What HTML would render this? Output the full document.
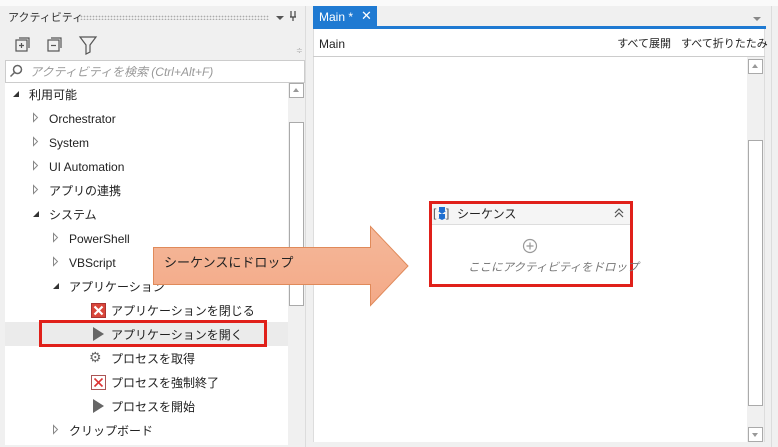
<!DOCTYPE html><html><head><meta charset="utf-8"><style>
*{margin:0;padding:0;box-sizing:border-box}
body{width:778px;height:447px;overflow:hidden;background:#f0f0f0;font-family:"Liberation Sans","Noto Sans CJK JP",sans-serif;font-size:12px;color:#222;position:relative}
.a{position:absolute}
.t{position:absolute;white-space:nowrap;font-size:12px;line-height:14px}
.tri{position:absolute;width:0;height:0}
</style></head><body>
<div class="a" style="left:0;top:0;width:778px;height:6px;background:#fafafa"></div>
<!-- left panel -->
<div class="a" style="left:0;top:6px;width:306px;height:441px;background:#f0f0f0;border-right:1px solid #dcdcdc"></div>
<div class="t" style="left:8px;top:11px;color:#333;font-size:11px">アクティビティ</div>
<div class="a" style="left:80px;top:15px;width:189px;height:5px;background-image:radial-gradient(#aaa 0.7px,transparent 0.9px);background-size:3px 3px"></div>
<div class="tri" style="left:276px;top:16px;border-left:4px solid transparent;border-right:4px solid transparent;border-top:4px solid #555"></div>
<svg class="a" style="left:289px;top:10px" width="8" height="12" fill="none" stroke="#444" stroke-width="1.2"><path d="M2 1v6M6 1v6M1 7h6M4 7v4"/></svg>
<svg class="a" style="left:14px;top:35px" width="90" height="20" viewBox="0 0 90 20" fill="none" stroke="#555" stroke-width="1.2">
<rect x="2" y="5" width="11" height="11"/><path d="M5 3h10v10"/><path d="M5 10.5h5M7.5 8v5"/>
<rect x="34" y="5" width="11" height="11"/><path d="M37 3h10v10"/><path d="M37 10.5h5"/>
<path d="M66 2h16l-6 8v7l-4 2v-9z"/></svg>
<div class="t" style="left:296px;top:44px;color:#aaa;font-size:8px">≑</div>
<div class="a" style="left:5px;top:60px;width:300px;height:23px;background:#fff;border:1px solid #ccc"></div>
<svg class="a" style="left:9px;top:64px" width="14" height="14" fill="none" stroke="#666" stroke-width="1.5"><circle cx="8.5" cy="5.5" r="4"/><path d="M5.5 8.5L1.5 12.5"/></svg>
<div class="t" style="left:30px;top:65px;color:#999;font-style:italic">アクティビティを検索 (Ctrl+Alt+F)</div>
<div class="a" style="left:5px;top:83px;width:300px;height:362px;background:#fff"></div>
<div class="a" style="left:5px;top:322px;width:283px;height:24px;background:#ebebeb"></div>
<!-- left scrollbar -->
<div class="a" style="left:288px;top:83px;width:17px;height:362px;background:#f0f0f0"></div>
<div class="a" style="left:289px;top:83px;width:15px;height:15px;border:1px solid #aaa;background:#fff"></div>
<div class="tri" style="left:293px;top:88px;border-left:3.5px solid transparent;border-right:3.5px solid transparent;border-bottom:4px solid #999"></div>
<div class="a" style="left:289px;top:122px;width:15px;height:184px;border:1px solid #aaa;background:#fff"></div>
<!-- tree -->
<div class="tri" style="left:13px;top:91px;border-left:6px solid transparent;border-bottom:6px solid #333"></div>
<div class="t" style="left:29px;top:88px">利用可能</div>
<svg class="a" style="left:0;top:0" width="300" height="447" fill="none" stroke="#888" stroke-width="1">
<path d="M33.5 113.5l4 4-4 4z"/><path d="M33.5 137.5l4 4-4 4z"/><path d="M33.5 161.5l4 4-4 4z"/><path d="M33.5 185.5l4 4-4 4z"/>
<path d="M53.5 233.5l4 4-4 4z"/><path d="M53.5 257.5l4 4-4 4z"/><path d="M53.5 425.5l4 4-4 4z"/></svg>
<div class="t" style="left:49px;top:112px">Orchestrator</div>
<div class="t" style="left:49px;top:136px">System</div>
<div class="t" style="left:49px;top:160px">UI Automation</div>
<div class="t" style="left:49px;top:184px">アプリの連携</div>
<div class="tri" style="left:33px;top:211px;border-left:6px solid transparent;border-bottom:6px solid #333"></div>
<div class="t" style="left:49px;top:208px">システム</div>
<div class="t" style="left:69px;top:232px">PowerShell</div>
<div class="t" style="left:69px;top:256px">VBScript</div>
<div class="tri" style="left:53px;top:283px;border-left:6px solid transparent;border-bottom:6px solid #333"></div>
<div class="t" style="left:69px;top:280px">アプリケーション</div>
<div class="a" style="left:91px;top:303px;width:15px;height:15px;background:#d9463a;border:1px solid #a33"></div>
<svg class="a" style="left:91px;top:303px" width="15" height="15" stroke="#fff" stroke-width="2.2"><path d="M3.5 3.5l8 8M11.5 3.5l-8 8"/></svg>
<div class="t" style="left:111px;top:304px">アプリケーションを閉じる</div>
<div class="tri" style="left:93px;top:327px;border-left:11px solid #666;border-top:7px solid transparent;border-bottom:7px solid transparent"></div>
<div class="t" style="left:111px;top:328px">アプリケーションを開く</div>
<div class="a" style="left:39px;top:320px;width:228px;height:27px;border:3px solid #e0201a"></div>
<div class="t" style="left:89px;top:350px;color:#666;font-size:14px">⚙</div>
<div class="t" style="left:111px;top:352px">プロセスを取得</div>
<div class="a" style="left:91px;top:375px;width:15px;height:15px;background:#fff;border:1px solid #a55"></div>
<svg class="a" style="left:91px;top:375px" width="15" height="15" stroke="#d33" stroke-width="1.6"><path d="M3.5 3.5l8 8M11.5 3.5l-8 8"/></svg>
<div class="t" style="left:111px;top:376px">プロセスを強制終了</div>
<div class="tri" style="left:93px;top:399px;border-left:11px solid #666;border-top:7px solid transparent;border-bottom:7px solid transparent"></div>
<div class="t" style="left:111px;top:400px">プロセスを開始</div>
<div class="t" style="left:69px;top:424px">クリップボード</div>
<!-- right panel -->
<div class="a" style="left:312px;top:6px;width:454px;height:441px;background:#f0f0f0"></div>
<div class="a" style="left:771px;top:6px;width:1px;height:441px;background:#dcdcdc"></div>
<div class="a" style="left:313px;top:6px;width:64px;height:21px;background:#1f7ad2"></div>
<div class="t" style="left:319px;top:10px;color:#fff">Main *</div>
<div class="t" style="left:361px;top:9px;color:#fff;font-size:13px">✕</div>
<div class="tri" style="left:753px;top:17px;border-left:4px solid transparent;border-right:4px solid transparent;border-top:4px solid #888"></div>
<div class="a" style="left:313px;top:26px;width:453px;height:3px;background:#1f7ad2"></div>
<div class="a" style="left:313px;top:29px;width:452px;height:413px;background:#fff;border-left:1px solid #ddd;border-right:1px solid #ddd"></div>
<div class="t" style="left:319px;top:37px">Main</div>
<div class="t" style="left:600px;width:71px;text-align:right;top:37px;font-size:11px">すべて展開</div>
<div class="t" style="left:681px;top:37px;font-size:11px">すべて折りたたみ</div>
<div class="a" style="left:313px;top:56px;width:452px;height:1px;background:#ccc"></div>
<div class="a" style="left:747px;top:57px;width:17px;height:385px;background:#f0f0f0"></div>
<div class="a" style="left:748px;top:59px;width:15px;height:15px;border:1px solid #aaa;background:#fff"></div>
<div class="tri" style="left:752px;top:64px;border-left:3.5px solid transparent;border-right:3.5px solid transparent;border-bottom:4px solid #999"></div>
<div class="a" style="left:748px;top:140px;width:15px;height:266px;border:1px solid #aaa;background:#fff"></div>
<div class="a" style="left:748px;top:427px;width:15px;height:15px;border:1px solid #aaa;background:#fff"></div>
<div class="tri" style="left:752px;top:433px;border-left:3.5px solid transparent;border-right:3.5px solid transparent;border-top:4px solid #999"></div>
<!-- sequence -->
<div class="a" style="left:429px;top:201px;width:204px;height:86px;border:3px solid #e0201a;background:#fff"></div>
<div class="a" style="left:432px;top:204px;width:198px;height:21px;background:#f5f5f5;border-bottom:1px solid #ddd"></div>
<div class="t" style="left:433px;top:206px;color:#555;font-size:12px">[</div>
<div class="t" style="left:446px;top:206px;color:#555;font-size:12px">]</div>
<svg class="a" style="left:437px;top:206px" width="10" height="14" fill="#1f6fd0"><rect x="2" y="1" width="6" height="4"/><rect x="2" y="8" width="6" height="4"/><path d="M1 5h8l-4 3z"/><path d="M1 12h8l-4 2z"/></svg>
<div class="t" style="left:457px;top:207px">シーケンス</div>
<svg class="a" style="left:613px;top:207px" width="12" height="12" fill="none" stroke="#555" stroke-width="1.2"><path d="M2 6l4-4 4 4M2 10l4-4 4 4"/></svg>
<svg class="a" style="left:522px;top:238px" width="16" height="16" fill="none" stroke="#999" stroke-width="1.2"><circle cx="8" cy="8" r="6.5"/><path d="M8 4.5v7M4.5 8h7"/></svg>
<div class="t" style="left:468px;top:261px;color:#777;font-style:italic;font-size:11.5px">ここにアクティビティをドロップ</div>
<!-- arrow -->
<svg class="a" style="left:150px;top:224px" width="262" height="84"><defs><linearGradient id="g" x1="0" y1="0" x2="0" y2="1"><stop offset="0" stop-color="#f5b89a"/><stop offset="1" stop-color="#f3a987"/></linearGradient></defs>
<path d="M3.5 23.5H220.5V2.5L258 42 220.5 81.5V60.5H3.5z" fill="url(#g)" stroke="#e08a5a" stroke-width="1"/></svg>
<div class="t" style="left:164px;top:256px;color:#222;font-size:13px">シーケンスにドロップ</div>
</body></html>
